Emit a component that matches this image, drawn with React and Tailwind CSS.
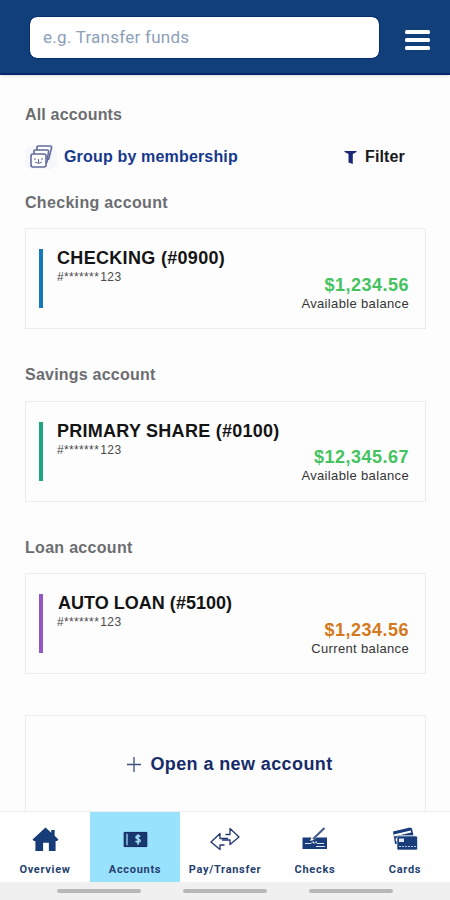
const ACCOUNTS = [
  {
    group: 'Checking account', name: 'CHECKING (#0900)', balance: '$1,234.56', label: 'Available balance',
    bar: 'bg-[#1479bd]', color: 'text-[#45c35f]', heading: 'tracking-[0.32px]', title: 'tracking-[0.32px]', offset: '-mt-[11px]'
  },
  {
    group: 'Savings account', name: 'PRIMARY SHARE (#0100)', balance: '$12,345.67', label: 'Available balance',
    bar: 'bg-[#20a583]', color: 'text-[#45c35f]', heading: 'tracking-[0.22px]', title: 'tracking-[0.26px]', offset: '-mt-[12px]'
  },
  {
    group: 'Loan account', name: 'AUTO LOAN (#5100)', balance: '$1,234.56', label: 'Current balance',
    bar: 'bg-[#9557c5]', color: 'text-[#d47a1c]', heading: 'tracking-[0.3px]', title: 'tracking-[0.02px] pl-px', offset: '-mt-[11px]'
  }
];

const HomeIcon = () => (
  <svg width="27" height="25" viewBox="0 0 28 26" fill="#173d78">
    <path d="M14 .5 20 6V3h3.500v6.200L27.500 13l-1.500 1.500h-1.500V25h-7v-8.500h-6V25h-8V14.500H2L.5 13Z" />
  </svg>
);

const BillIcon = () => (
  <svg width="25" height="17" viewBox="0 0 26 18" fill="none">
    <path d="M1 1.500h24v15H1Z" fill="#17386f" stroke="#10205f" />
    <path d="M4 3v12" stroke="#a9e5fb" strokeWidth="1.300" />
    <path d="M18 5.900c-1-1-4.500-1.200-4.500.8 0 2.300 4.500 1.100 4.500 3.500 0 2-3.500 2-5 .6M15.700 3.500v11" stroke="#9edcf5" strokeWidth="1.700" />
  </svg>
);

const TransferIcon = () => (
  <svg width="30" height="24" viewBox="0 0 30 24" fill="none" stroke="#24356f" strokeWidth="1.300" strokeLinejoin="round">
    <path d="M15.500 7.500H20V1.500L29 10l-9 7.500V13h-8" />
    <path d="M18 11.500h-8V6.500L1 15l9 7.500V18h4.500" />
  </svg>
);

const CheckIcon = () => (
  <svg width="26" height="24" viewBox="0 0 26 24" fill="none">
    <path d="M.5 10.500h9L8 14l3.500-1 3-2.500h10.500V22H.5Z" fill="#193c7a" />
    <path d="m11 12 11.500-11" stroke="#415989" strokeWidth="2" />
    <path d="M3 16.500h6l2-2 1 2 2-2 1 2h7M14 19.500h9" stroke="#dce5f1" />
  </svg>
);

const CardsIcon = () => (
  <svg width="28" height="25" viewBox="0 0 28 25">
    <path d="m2 4.500 17-4 2 1 1.500 7H9L6 11v6H4Z" fill="#193c7a" />
    <path d="m3 8.500 17-4" stroke="#fff" strokeWidth="2" />
    <path d="m4.500 11.500 3-1v3.500l-2.500.5Z" fill="#fff" />
    <rect x="6" y="9" width="20.500" height="14" rx="1.500" fill="#193c7a" stroke="#fff" strokeWidth=".6" />
    <path d="M8 11.500h5v3.500H8Z" fill="#e3ebf7" />
    <path d="M8 19.500h17" stroke="#b6c6e2" strokeDasharray="2 1" />
  </svg>
);

const TABS = [
  { name: 'Overview', icon: HomeIcon },
  { name: 'Accounts', icon: BillIcon, active: true },
  { name: 'Pay/Transfer', icon: TransferIcon },
  { name: 'Checks', icon: CheckIcon },
  { name: 'Cards', icon: CardsIcon }
];

function Header() {
  return (
    <header className="flex h-[75px] shrink-0 items-start border-b-2 border-[#06276b] bg-[#103f79] pr-[20px] pl-[30px] shadow-sm">
      <input
        placeholder="e.g. Transfer funds"
        className="mt-[17px] h-[41px] w-[349px] rounded-[7px] bg-white px-[13px] pb-[2px] font-[Roboto,sans-serif] text-[17px] tracking-[0.25px] outline-1 outline-[#082c70] placeholder:text-[#8da0b9]"
      />
      <button className="mt-[30px] ml-auto flex flex-col gap-[4px]">
        <span className="h-[4px] w-[25px] rounded-[1.500px] bg-white" />
        <span className="h-[4px] w-[25px] rounded-[1.500px] bg-white" />
        <span className="h-[4px] w-[25px] rounded-[1.500px] bg-white" />
      </button>
    </header>
  );
}

function Toolbar() {
  return (
    <div className="mt-[20px] flex h-[24px] items-center">
      <span className="flex h-[23px] w-[32px] items-center justify-center rounded-md bg-[#f5f7fa]">
        <svg width="24" height="24" viewBox="0 0 24 24" fill="#fff" stroke="#626b99" strokeWidth="1.600">
          <path d="M8 7V2q0-1 1-1h12q2 0 1.500 2L20 13q0 2-3 2Z" />
          <path d="M5 11V6q0-1 1-1h12q2 0 1.500 2L18 17q-1 2-3 2" />
          <rect x="2" y="9" width="15" height="13" rx="2" />
          <path d="M6 13v2M9.500 14v4M13 13v2M6 17q3.500 3 7 0" fill="none" strokeWidth="1" />
        </svg>
      </span>
      <button className="ml-[7px] text-[16px] font-bold tracking-[0.17px] text-[#15388d]">Group by membership</button>
      <button className="mr-[20px] ml-auto flex items-center gap-[8px] text-[16px] font-bold tracking-[0.15px] text-[#17181d]">
        <svg width="13" height="15" viewBox="0 0 13 15" fill="#1b2878">
          <path d="M.5 1h12v1L8.800 4v10L4.500 12.500V4L.5 2Z" />
        </svg>
        Filter
      </button>
    </div>
  );
}

function AccountCard({ account }) {
  return (
    <section className="mb-[36px]">
      <h2 className={`h-[20px] text-[16px] leading-[20px] font-bold text-[#6c6d70] ${account.heading}`}>{account.group}</h2>
      <div className="mt-[15.300px] mr-[-1px] flex h-[101px] border-[1.500px] border-[#ececed] pt-[20px] pr-[16px] pl-[13px]">
        <div className={`h-[59px] w-[4px] shrink-0 ${account.bar}`} />
        <div className="-mt-px ml-[14px] flex-1">
          <h3 className={`text-[18px] leading-[20px] font-bold whitespace-nowrap text-[#141414] ${account.title}`}>{account.name}</h3>
          <p className="text-[12px] leading-[18px] tracking-[0.35px] text-[#4a4a4a]">#*******<span className="ml-[1px] tracking-[0.5px]">123</span></p>
          <div className={`text-right ${account.offset}`}>
            <p className={`text-[18px] leading-[20px] font-bold tracking-[0.5px] ${account.color}`}>{account.balance}</p>
            <p className="text-[13px] leading-[18px] tracking-[0.35px] text-[#353535]">{account.label}</p>
          </div>
        </div>
      </div>
    </section>
  );
}

function BottomNav() {
  return (
    <nav className="shrink-0 border-t border-[#efeff0] bg-white">
      <div className="grid h-[70px] grid-cols-5">
        {TABS.map(({ name, icon: Icon, active }) => (
          <button key={name} className={`flex flex-col items-center ${active ? 'bg-[#99e2fd]' : ''}`}>
            <span className="mt-[12px] flex h-[30px] items-center justify-center"><Icon /></span>
            <span className="mt-[9px] font-[Roboto,sans-serif] text-[11px] leading-[14px] font-bold tracking-[0.7px] text-[#263f70]">{name}</span>
          </button>
        ))}
      </div>
      <div className="flex h-[18px] items-center justify-center gap-[42px] bg-[#f0f0f0]">
        <span className="h-[4px] w-[84px] rounded-full bg-[#b7b7b7]" />
        <span className="h-[4px] w-[84px] rounded-full bg-[#b7b7b7]" />
        <span className="h-[4px] w-[84px] rounded-full bg-[#b7b7b7]" />
      </div>
    </nav>
  );
}

export default function App() {
  return (
    <div className="flex h-[900px] w-[450px] flex-col overflow-hidden bg-[#fdfdfe] font-['Liberation_Sans',sans-serif]">
      <Header />
      <main className="min-h-0 flex-1 overflow-hidden px-[25px] pt-[30px]">
        <h1 className="h-[20px] text-[16px] leading-[20px] font-bold tracking-[0.17px] text-[#6c6d70]">All accounts</h1>
        <Toolbar />
        <div className="mt-[24px]">
          {ACCOUNTS.map((account) => <AccountCard key={account.group} account={account} />)}
        </div>
        <button className="mt-[41px] flex h-[120px] w-[401px] justify-center gap-[9px] border-[1.500px] border-[#ececed] pt-[37px] pl-[9px] text-[#172b68]">
          <svg className="mt-[4px]" width="14" height="15" viewBox="0 0 14 15" stroke="#3e507d" strokeWidth="1.300">
            <path d="M7 0v15M0 7.500h14" />
          </svg>
          <span className="text-[18px] leading-[22px] font-bold tracking-[0.4px]">Open a new account</span>
        </button>
      </main>
      <BottomNav />
    </div>
  );
}
